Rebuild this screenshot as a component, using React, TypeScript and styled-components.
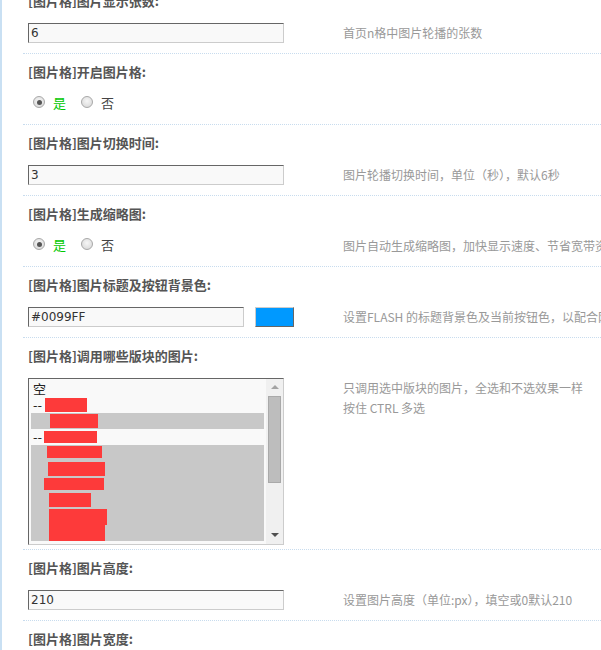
import styled, { createGlobalStyle } from "styled-components";

const GlobalStyle = createGlobalStyle`
  html, body {
    margin: 0;
    padding: 0;
    background: #fff;
    overflow: hidden;
  }
  body {
    font-family: "Noto Sans CJK SC", "DejaVu Sans", sans-serif;
    font-size: 12px;
    color: #333;
  }
`;

const Page = styled.div`
  border-left: 2px solid #c9e0f3;
  padding-left: 21px;
  min-height: 700px;
`;

const List = styled.div`
  margin-top: -17px;
`;

const Row = styled.div<{ $bottom?: number }>`
  padding: 10px 0 ${({ $bottom }) => $bottom ?? 10}px 5px;
  border-bottom: 1px dotted #c8dcee;
`;

const Label = styled.div`
  height: 16px;
  line-height: 16px;
  margin-bottom: 14px;
  font-size: 13px;
  font-weight: bold;
  color: #555;
  white-space: nowrap;
`;

const Body = styled.div`
  display: flex;
  align-items: flex-start;
`;

const Control = styled.div`
  width: 315px;
  height: auto;
  flex: none;
  display: flex;
  align-items: center;
`;

const Help = styled.div`
  color: #999;
  font-size: 12px;
  line-height: 20px;
  white-space: nowrap;
`;

const TextBox = styled.input<{ $width?: number }>`
  box-sizing: border-box;
  width: ${({ $width }) => $width ?? 256}px;
  height: 20px;
  margin: 0;
  padding: 0 0 0 2px;
  border: 1px solid;
  border-color: #666 #ccc #ccc #666;
  background: #f9f9f9;
  font-family: "DejaVu Sans", sans-serif;
  font-size: 12px;
  color: #333;
  outline: none;
`;

const Swatch = styled.span<{ $color: string }>`
  box-sizing: border-box;
  width: 39px;
  height: 20px;
  margin-left: 11px;
  border: 1px solid;
  border-color: #ccc #666 #666 #ccc;
  background: ${({ $color }) => $color};
`;

const RadioGroup = styled.div`
  display: flex;
  align-items: center;
  height: 20px;
  margin: -2px 0 2px;
  padding-left: 5px;
`;

const RadioDot = styled.span<{ $checked?: boolean }>`
  box-sizing: border-box;
  width: 12px;
  height: 12px;
  border-radius: 50%;
  border: 1px solid #a8a8a8;
  background: radial-gradient(circle at 50% 40%, #f6f6f6, #d4d4d4);
  display: inline-flex;
  align-items: center;
  justify-content: center;
  &::after {
    content: "";
    width: 5px;
    height: 5px;
    border-radius: 50%;
    background: #555;
    display: ${({ $checked }) => ($checked ? "block" : "none")};
  }
`;

const RadioText = styled.span<{ $active?: boolean }>`
  margin-left: 8px;
  margin-right: 15px;
  font-size: 13px;
  color: ${({ $active }) => ($active ? "#00c800" : "#444")};
`;

const ListBox = styled.div`
  box-sizing: border-box;
  width: 256px;
  height: 167px;
  display: flex;
  border: 1px solid;
  border-color: #666 #ccc #ccc #666;
  background: #f9f9f9;
`;

const Options = styled.div`
  flex: 1;
  padding: 2px 2px 0 2px;
  overflow: hidden;
`;

const Option = styled.div<{ $selected?: boolean }>`
  position: relative;
  height: 16px;
  line-height: 16px;
  padding-left: 2px;
  font-size: 13px;
  color: #222;
  white-space: nowrap;
  background: ${({ $selected }) => ($selected ? "#c8c8c8" : "transparent")};
`;

// red marks covering the board names
const Redact = styled.span<{ $x: number; $y: number; $w: number; $h: number }>`
  position: absolute;
  left: ${({ $x }) => $x}px;
  top: ${({ $y }) => $y}px;
  width: ${({ $w }) => $w}px;
  height: ${({ $h }) => $h}px;
  background: #fd3a3a;
`;

const ScrollBar = styled.div`
  width: 17px;
  flex: none;
  background: #f0f0f0;
  display: flex;
  flex-direction: column;
  align-items: center;
`;

const Arrow = styled.span<{ $dir: "up" | "down" }>`
  width: 0;
  height: 0;
  border-left: 4px solid transparent;
  border-right: 4px solid transparent;
  ${({ $dir }) =>
    $dir === "up"
      ? "border-bottom: 4px solid #a3a3a3; margin-top: 6px;"
      : "border-top: 4px solid #505050; margin-top: auto; margin-bottom: 7px;"}
`;

const Thumb = styled.span`
  box-sizing: border-box;
  width: 13px;
  height: 87px;
  margin-top: 7px;
  background: #bdbdbd;
  border: 1px solid #a9a9a9;
`;

type Opt = { text?: string; selected?: boolean; red?: [number, number, number, number] };

const boards: Opt[] = [
  { text: "空" },
  { text: "--", red: [14, 1, 42, 14] },
  { selected: true, red: [19, 1, 48, 14] },
  { text: "--", red: [13, 2, 53, 12] },
  { selected: true, red: [16, 1, 55, 12] },
  { selected: true, red: [17, 1, 57, 14] },
  { selected: true, red: [13, 1, 60, 12] },
  { selected: true, red: [18, 0, 42, 14] },
  { selected: true, red: [18, 0, 58, 16] },
  { selected: true, red: [18, 0, 56, 16] },
];

const Radios = () => (
  <RadioGroup>
    <RadioDot $checked />
    <RadioText $active>是</RadioText>
    <RadioDot />
    <RadioText>否</RadioText>
  </RadioGroup>
);

const App = () => {
  return (
    <Page>
      <GlobalStyle />
      <List>
        <Row>
          <Label>[图片格]图片显示张数:</Label>
          <Body>
            <Control>
              <TextBox defaultValue="6" />
            </Control>
            <Help>首页n格中图片轮播的张数</Help>
          </Body>
        </Row>

        <Row>
          <Label>[图片格]开启图片格:</Label>
          <Body>
            <Control>
              <Radios />
            </Control>
          </Body>
        </Row>

        <Row>
          <Label>[图片格]图片切换时间:</Label>
          <Body>
            <Control>
              <TextBox defaultValue="3" />
            </Control>
            <Help>图片轮播切换时间，单位（秒），默认6秒</Help>
          </Body>
        </Row>

        <Row>
          <Label>[图片格]生成缩略图:</Label>
          <Body>
            <Control>
              <Radios />
            </Control>
            <Help>图片自动生成缩略图，加快显示速度、节省宽带资源</Help>
          </Body>
        </Row>

        <Row>
          <Label>[图片格]图片标题及按钮背景色:</Label>
          <Body>
            <Control>
              <TextBox $width={216} defaultValue="#0099FF" />
              <Swatch $color="#0099ff" />
            </Control>
            <Help>设置FLASH 的标题背景色及当前按钮色，以配合网站风格</Help>
          </Body>
        </Row>

        <Row $bottom={4}>
          <Label>[图片格]调用哪些版块的图片:</Label>
          <Body>
            <Control>
              <ListBox>
                <Options>
                  {boards.map((o, i) => (
                    <Option key={i} $selected={o.selected}>
                      {o.text}
                      {o.red && <Redact $x={o.red[0]} $y={o.red[1]} $w={o.red[2]} $h={o.red[3]} />}
                    </Option>
                  ))}
                </Options>
                <ScrollBar>
                  <Arrow $dir="up" />
                  <Thumb />
                  <Arrow $dir="down" />
                </ScrollBar>
              </ListBox>
            </Control>
            <Help>
              只调用选中版块的图片，全选和不选效果一样
              <br />
              按住 CTRL 多选
            </Help>
          </Body>
        </Row>

        <Row>
          <Label>[图片格]图片高度:</Label>
          <Body>
            <Control>
              <TextBox defaultValue="210" />
            </Control>
            <Help>设置图片高度（单位:px），填空或0默认210</Help>
          </Body>
        </Row>

        <Row>
          <Label>[图片格]图片宽度:</Label>
          <Body>
            <Control>
              <TextBox defaultValue="250" />
            </Control>
            <Help>设置图片宽度（单位:px），填空或0默认250</Help>
          </Body>
        </Row>
      </List>
    </Page>
  );
};

export default App;
